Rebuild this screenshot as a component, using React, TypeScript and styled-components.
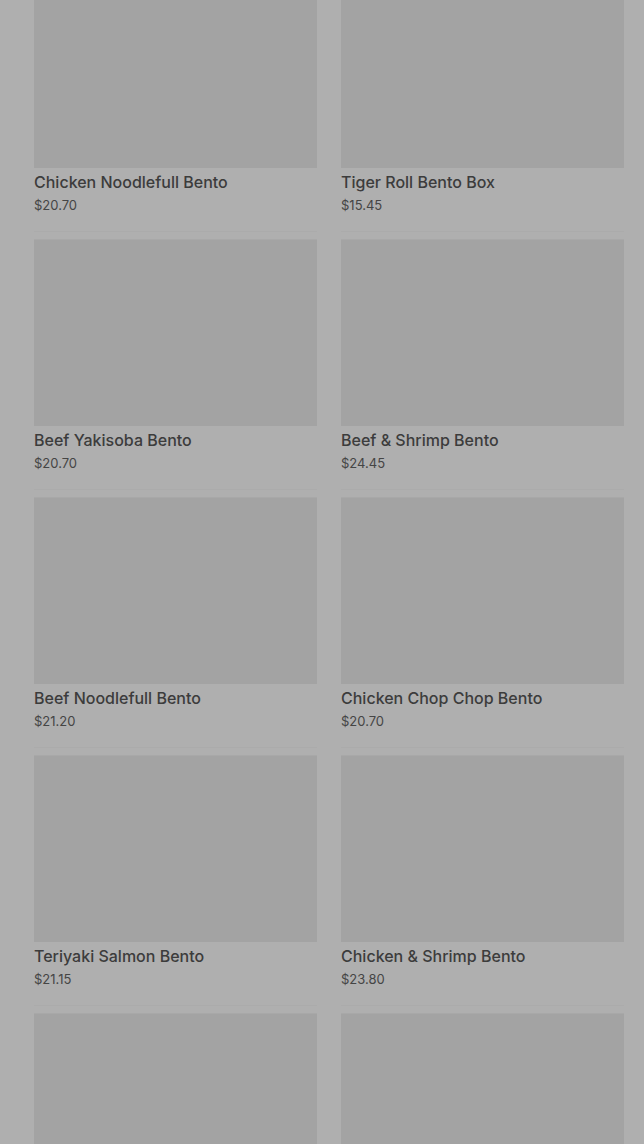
import styled, { createGlobalStyle } from "styled-components";

const GlobalStyle = createGlobalStyle`
  html, body {
    margin: 0;
    padding: 0;
    background: #afafaf;
    overflow: hidden;
  }
  body {
    font-family: Inter, Roboto, "Liberation Sans", sans-serif;
  }
`;

const Page = styled.div`
  width: 644px;
  height: 1144px;
  overflow: hidden;
  background: #afafaf;
`;

const Grid = styled.div`
  display: grid;
  grid-template-columns: 283px 283px;
  column-gap: 24px;
  row-gap: 7px;
  padding: 0 20px 0 34px;
  margin-top: -19px;
`;

const Card = styled.div`
  display: flex;
  flex-direction: column;
  height: 251px;
  box-sizing: border-box;
  border-bottom: 1px solid #ababab;
`;

const Thumb = styled.div`
  height: 187px;
  background: #a3a3a3;
  border-top: 1px solid #a8a8a8;
  box-sizing: border-box;
`;

const Info = styled.div`
  display: flex;
  flex-direction: column;
  gap: 3px;
  padding-top: 4px;
`;

const Title = styled.div`
  font-size: 16px;
  line-height: 21px;
  font-weight: 500;
  color: #3c3c3c;
`;

const Price = styled.div`
  font-size: 13px;
  line-height: 18px;
  color: #454545;
`;

const items = [
  { name: "Chicken Noodlefull Bento", price: "$20.70" },
  { name: "Tiger Roll Bento Box", price: "$15.45" },
  { name: "Beef Yakisoba Bento", price: "$20.70" },
  { name: "Beef & Shrimp Bento", price: "$24.45" },
  { name: "Beef Noodlefull Bento", price: "$21.20" },
  { name: "Chicken Chop Chop Bento", price: "$20.70" },
  { name: "Teriyaki Salmon Bento", price: "$21.15" },
  { name: "Chicken & Shrimp Bento", price: "$23.80" },
  { name: "", price: "" },
  { name: "", price: "" },
];

export default function App() {
  return (
    <Page>
      <GlobalStyle />
      <Grid>
        {items.map((item, i) => (
          <Card key={i}>
            <Thumb />
            <Info>
              <Title>{item.name}</Title>
              <Price>{item.price}</Price>
            </Info>
          </Card>
        ))}
      </Grid>
    </Page>
  );
}
